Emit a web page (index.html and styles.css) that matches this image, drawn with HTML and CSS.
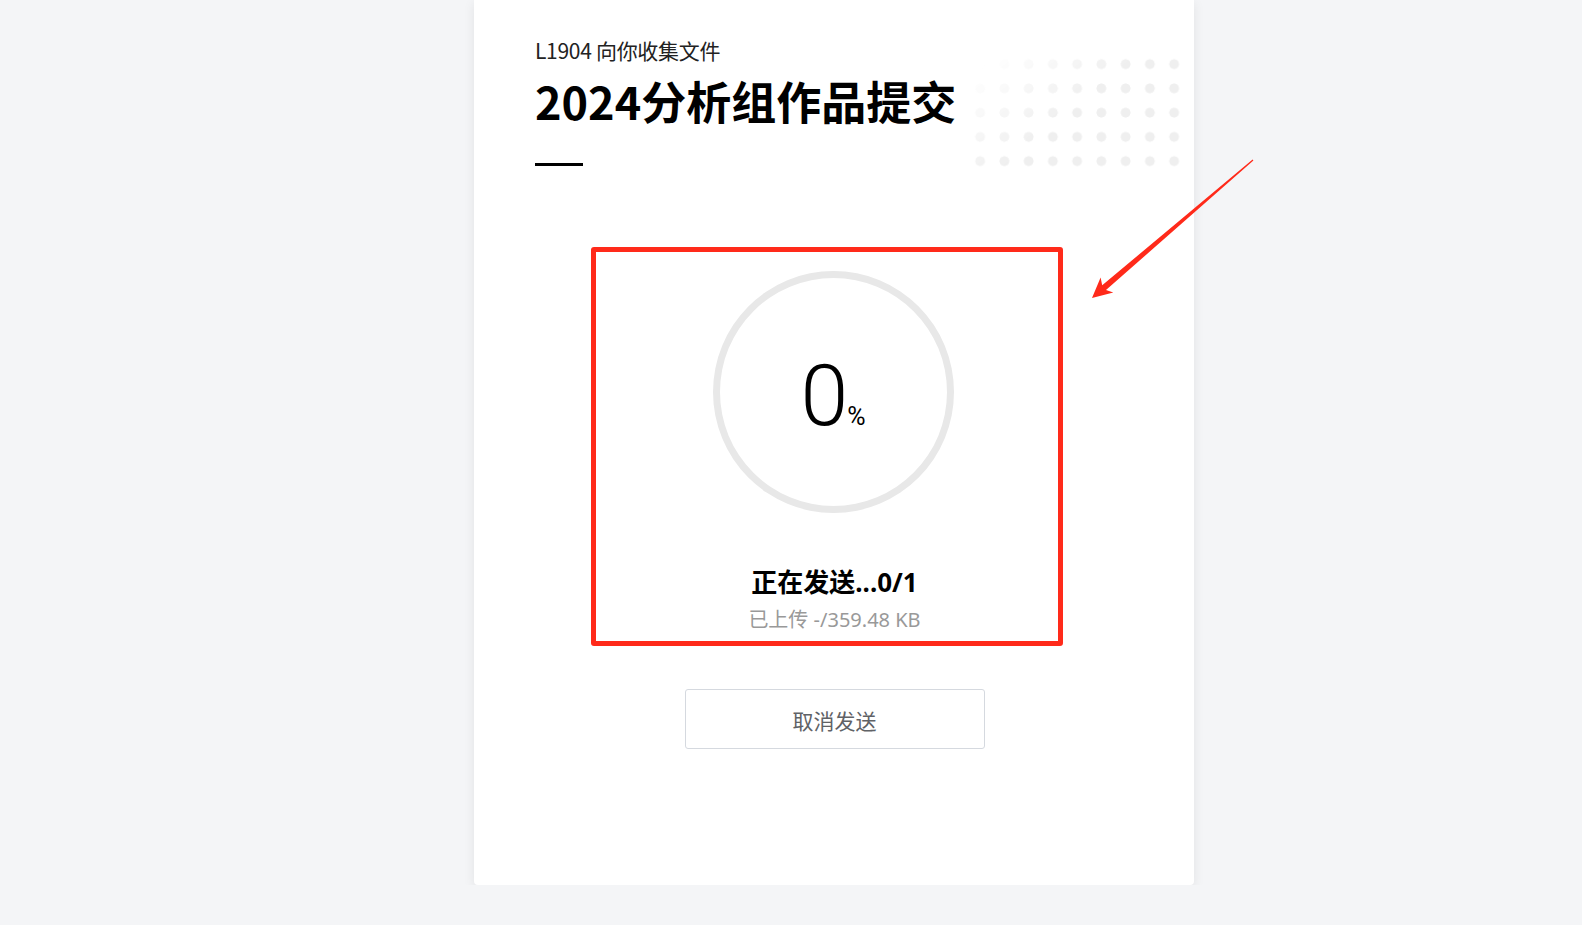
FILE: index.html
```html
<!DOCTYPE html>
<html lang="zh-CN">
<head>
    <meta charset="UTF-8">
    <meta name="viewport" content="width=device-width, initial-scale=1.0">
    <title>2024分析组作品提交</title>
    <link rel="stylesheet" href="styles.css">
</head>
<body>
    <div class="card">
        <div class="dots"></div>
        <div class="subtitle">L1904 向你收集文件</div>
        <h1 class="title">2024分析组作品提交</h1>
        <div class="title-line"></div>

        <div class="progress">
            <div class="ring">
                <span class="percent">0</span><span class="percent-sign">%</span>
            </div>
            <div class="status">正在发送...0/1</div>
            <div class="uploaded">已上传 -/359.48 KB</div>
            <button class="cancel-btn">取消发送</button>
        </div>
    </div>

    <!-- screenshot annotation -->
    <div class="mark-box"></div>
    <svg class="mark-arrow" viewBox="1080 150 180 160" width="180" height="160">
        <polygon fill="#ff2a1a" points="1252.6,159.4 1253.4,160.6 1106,290 1113.3,292.4 1092,298 1100.6,277.6 1102.2,285.3"/>
    </svg>
</body>
</html>
```

FILE: styles.css
```css
body {
    margin: 0;
    background-color: #f4f5f7;
    font-family: "Noto Sans CJK SC", "Noto Sans", sans-serif;
    color: #222;
}

.card {
    position: relative;
    width: 720px;
    height: 885px;
    margin-left: 474px;
    padding: 35px 60px 0 61px;
    box-sizing: border-box;
    background: #fff;
    border-radius: 0 0 4px 4px;
    box-shadow: 0 3px 12px rgba(0, 0, 0, 0.08);
}

.dots {
    position: absolute;
    left: 494px;
    top: 52px;
    width: 218px;
    height: 122px;
    background-image: radial-gradient(circle, #efefef 4.6px, transparent 5.2px);
    background-size: 24.25px 24.25px;
    -webkit-mask-image: linear-gradient(140deg, transparent 8%, #000 48%);
    mask-image: linear-gradient(140deg, transparent 8%, #000 48%);
}

.subtitle {
    position: relative;
    font-size: 21px;
    line-height: 30px;
    letter-spacing: -0.3px;
    color: #222;
}

.title {
    position: relative;
    margin: 9px 0 0;
    font-size: 45px;
    line-height: 54px;
    font-weight: 700;
    color: #000;
}

.title-line {
    width: 48px;
    height: 3px;
    margin-top: 35px;
    background: #000;
}

.progress {
    display: flex;
    flex-direction: column;
    align-items: center;
    margin-top: 105px;
}

.ring {
    width: 241px;
    height: 242px;
    box-sizing: border-box;
    border: 7px solid #e8e8e8;
    border-radius: 50%;
    display: flex;
    justify-content: center;
    align-items: baseline;
    padding-top: 68px;
    margin-left: -3px;
}

.percent {
    font-family: Roboto, "Noto Sans", sans-serif;
    font-weight: 300;
    font-size: 86px;
    line-height: 100px;
    color: #000;
}

.percent-sign {
    font-family: Roboto, "Noto Sans", sans-serif;
    font-size: 25px;
    margin-left: -1px;
    color: #000;
}

.status {
    margin-top: 52px;
    font-family: "Noto Sans", "Noto Sans CJK SC", sans-serif;
    font-size: 26px;
    line-height: 34px;
    font-weight: 700;
    color: #000;
}

.uploaded {
    margin-top: 7px;
    font-family: "Noto Sans", "Noto Sans CJK SC", sans-serif;
    font-size: 20px;
    line-height: 28px;
    color: #999;
}

.cancel-btn {
    margin-top: 55px;
    width: 300px;
    height: 60px;
    padding-top: 3px;
    background: #fff;
    border: 1px solid #d5d9df;
    border-radius: 3px;
    font-family: inherit;
    font-size: 21px;
    color: #606266;
    cursor: pointer;
}

.mark-box {
    position: absolute;
    left: 591px;
    top: 247px;
    width: 472px;
    height: 399px;
    box-sizing: border-box;
    border: 5px solid #ff2a1a;
    border-radius: 3px;
}

.mark-arrow {
    position: absolute;
    left: 1080px;
    top: 150px;
}
```
